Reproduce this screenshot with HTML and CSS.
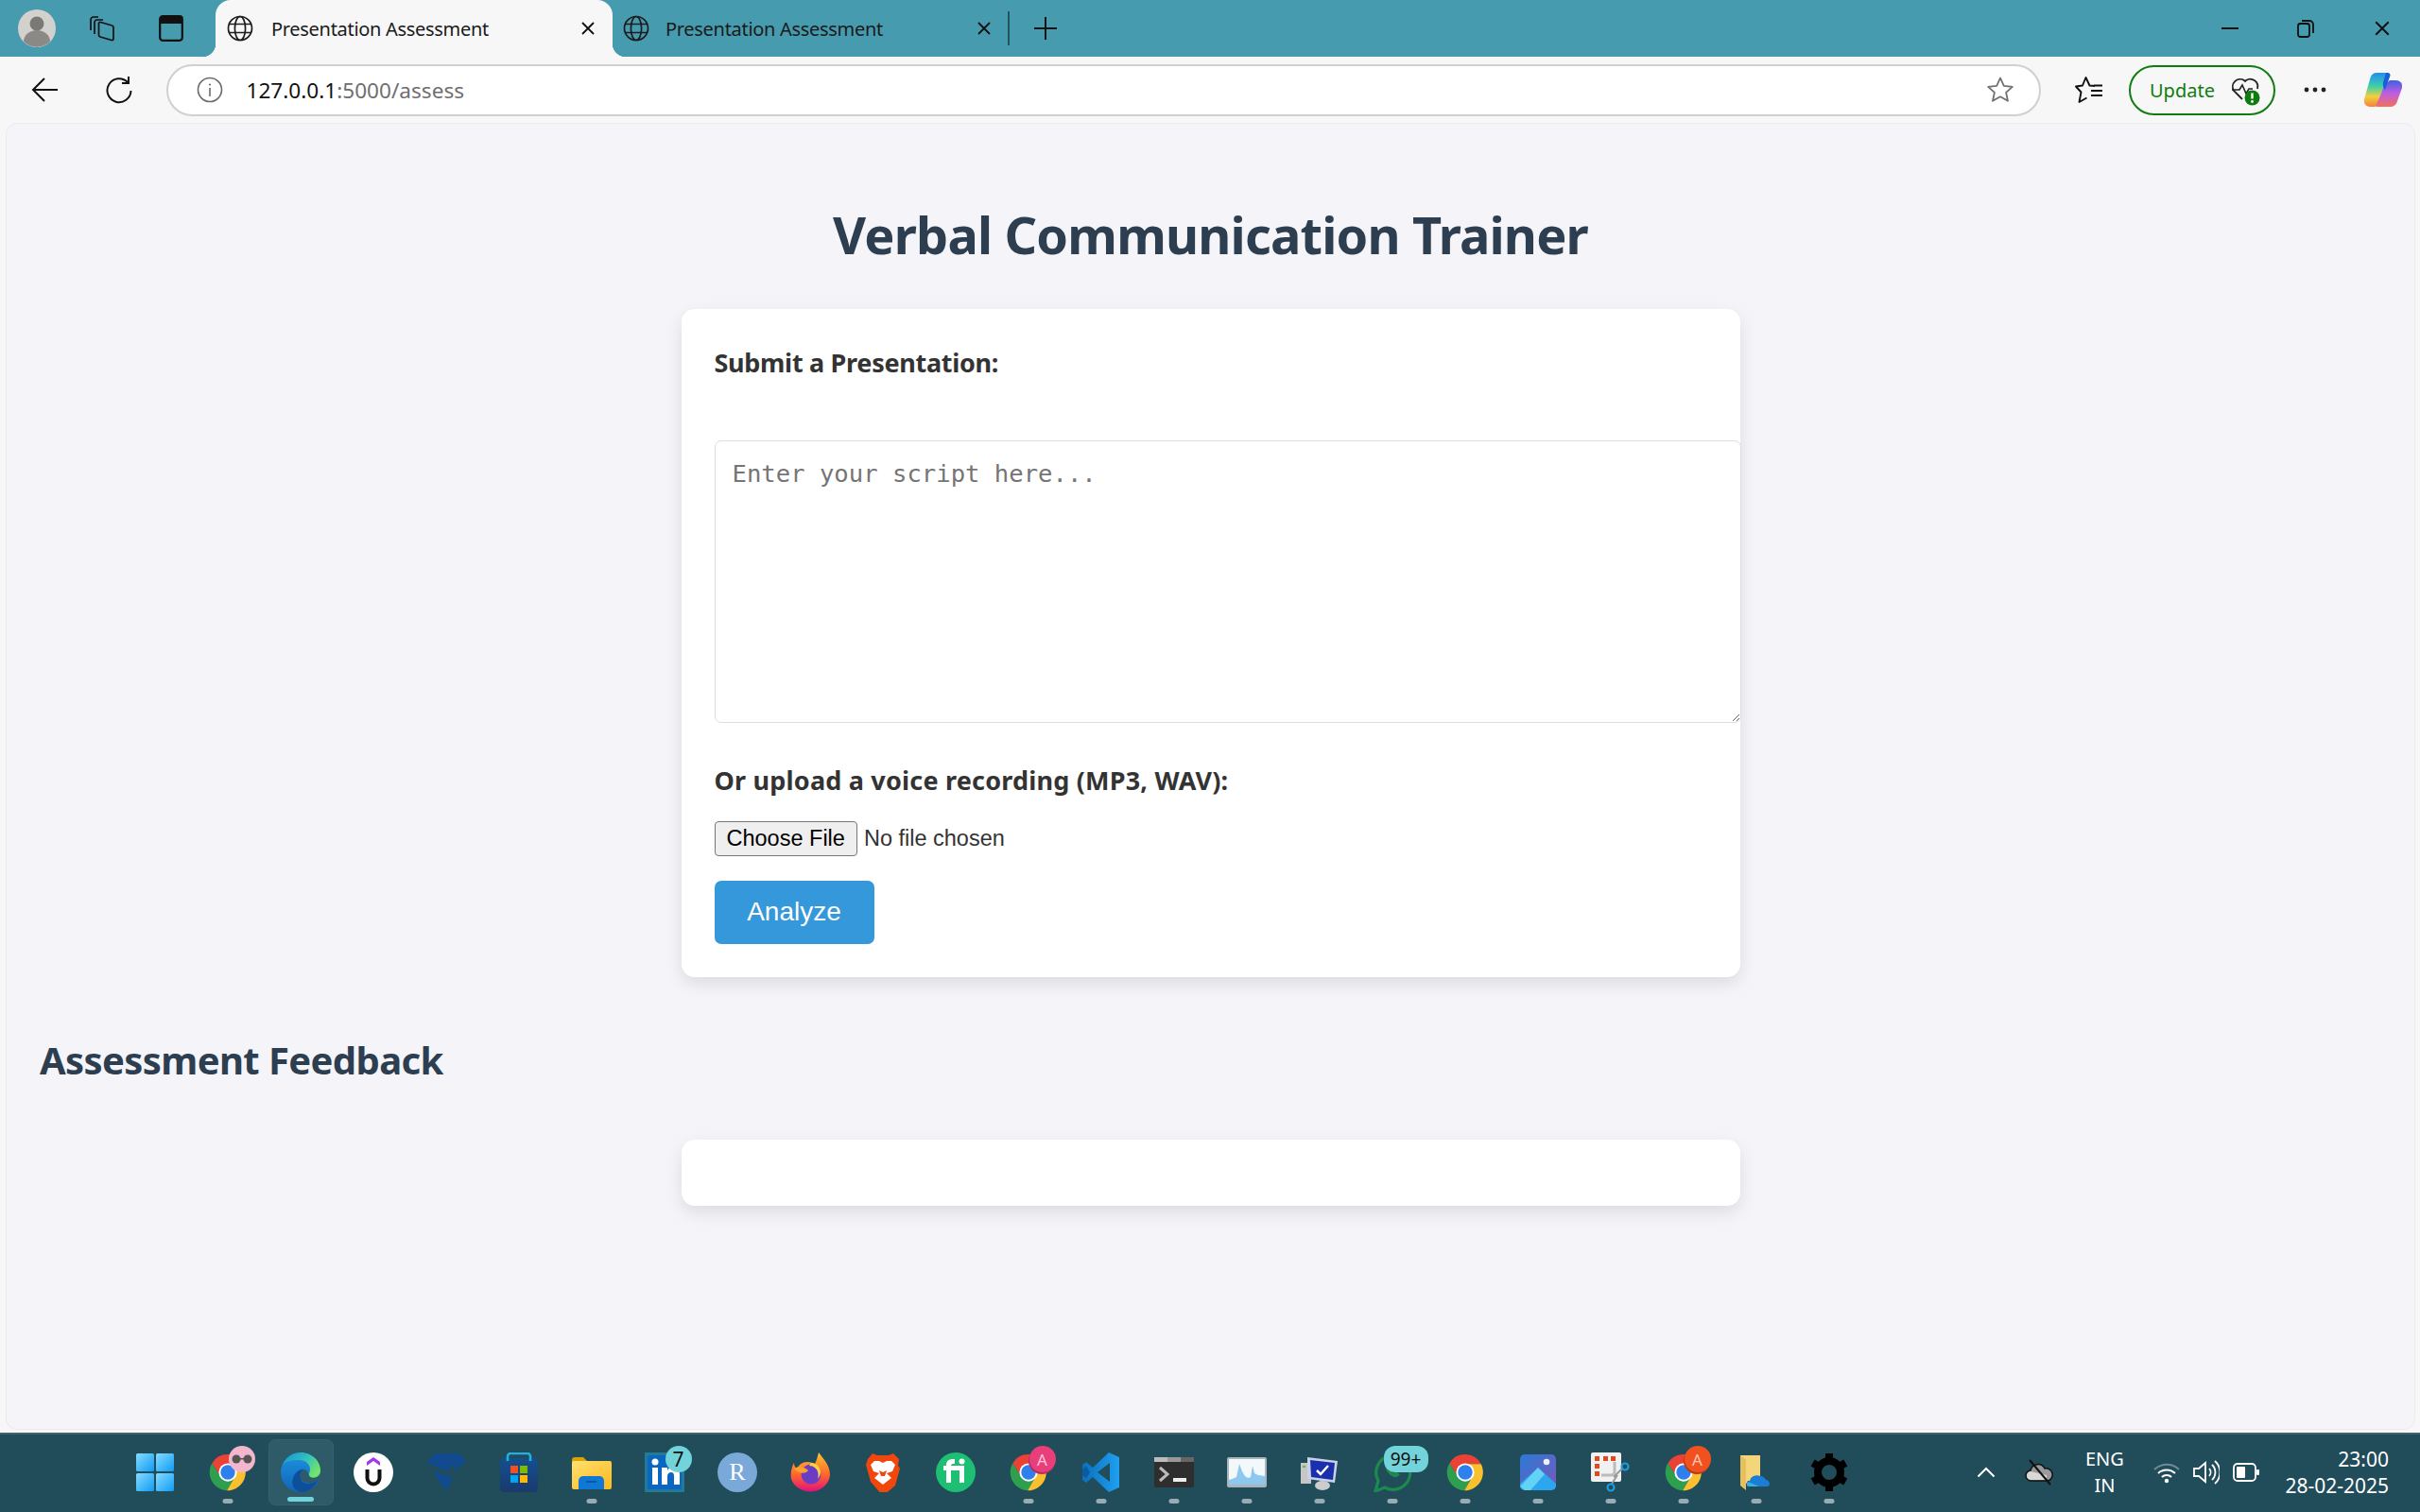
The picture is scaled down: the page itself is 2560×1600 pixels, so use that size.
FILE: index.html
```html
<!DOCTYPE html>
<html lang="en">
<head>
<meta charset="utf-8">
<title>Presentation Assessment</title>
<link rel="stylesheet" href="styles.css">
</head>
<body>
<svg class="defs" width="0" height="0" aria-hidden="true">
  <symbol id="globe" viewBox="0 0 28 28"><g fill="none" stroke="#1c1c1c" stroke-width="1.7"><circle cx="14" cy="14" r="12.5"/><ellipse cx="14" cy="14" rx="5.6" ry="12.5"/><path d="M2.5 9.5h23M2.5 18.5h23"/></g></symbol>
  <symbol id="x" viewBox="0 0 16 16"><path d="M2 2l12 12M14 2L2 14" fill="none" stroke="#111" stroke-width="1.8"/></symbol>
  <symbol id="chrome" viewBox="0 0 48 48">
    <path fill="#ea4335" d="M4.9 13L15.3 29A10 10 0 0 1 24 14H43.1A22 22 0 0 0 4.9 13Z"/>
    <path fill="#2e9e4f" d="M4.9 13A22 22 0 0 0 23 46L32.7 29A10 10 0 0 1 15.3 29Z"/>
    <path fill="#fbc02d" d="M43.1 14H24A10 10 0 0 1 32.7 29L23 46A22 22 0 0 0 43.1 14Z"/>
    <circle cx="24" cy="24" r="11" fill="#fff"/><circle cx="24" cy="24" r="8.8" fill="#2f80ed"/>
  </symbol>
  <linearGradient id="g-win" x1="0" y1="0" x2="1" y2="1"><stop offset="0" stop-color="#86dcff"/><stop offset="1" stop-color="#0f9cf5"/></linearGradient>
  <linearGradient id="g-edge" x1="0" y1="0" x2="1" y2="0.6"><stop offset="0" stop-color="#1590d0"/><stop offset=".55" stop-color="#2fc0c0"/><stop offset="1" stop-color="#72e468"/></linearGradient>
  <linearGradient id="g-edge2" x1="0" y1="0" x2="0" y2="1"><stop offset="0" stop-color="#1e93e0"/><stop offset="1" stop-color="#0f66b8"/></linearGradient>
  <linearGradient id="g-fold" x1="0" y1="0" x2="1" y2="1"><stop offset="0" stop-color="#ffe170"/><stop offset="1" stop-color="#fcb81e"/></linearGradient>
  <linearGradient id="g-fox" x1="0" y1="0" x2="0" y2="1"><stop offset="0" stop-color="#ffc52e"/><stop offset=".55" stop-color="#ff6a2a"/><stop offset="1" stop-color="#e3107a"/></linearGradient>
  <linearGradient id="g-code" x1="0" y1="0" x2="1" y2="0"><stop offset="0" stop-color="#0a6fbb"/><stop offset="1" stop-color="#1fa0ef"/></linearGradient>
  <linearGradient id="g-photo" x1="0" y1="0" x2="1" y2="1"><stop offset="0" stop-color="#2a7ad6"/><stop offset="1" stop-color="#7a58b8"/></linearGradient>
  <linearGradient id="g-store" x1="0" y1="0" x2="0" y2="1"><stop offset="0" stop-color="#154f8f"/><stop offset="1" stop-color="#1a3a6c"/></linearGradient>
  <linearGradient id="g-cop" x1="0" y1="0" x2="0" y2="1"><stop offset="0" stop-color="#1f8ef0"/><stop offset=".4" stop-color="#3fd0a8"/><stop offset=".7" stop-color="#f2d03c"/><stop offset="1" stop-color="#f5803a"/></linearGradient>
  <linearGradient id="g-cop2" x1="0" y1="0" x2="0" y2="1"><stop offset="0" stop-color="#3f5fe8"/><stop offset=".5" stop-color="#c05ee0"/><stop offset="1" stop-color="#f2705a"/></linearGradient>
</svg>

<header class="tabbar">
  <div class="profile"><svg width="40" height="40" viewBox="0 0 40 40"><circle cx="20" cy="20" r="20" fill="#d3d1cd"/><circle cx="20" cy="15" r="7.5" fill="#7b7976"/><path d="M6 34a14 12 0 0 1 28 0 20 20 0 0 1-28 0Z" fill="#8b8986"/></svg></div>
  <div class="bar-icon"><svg width="28" height="28" viewBox="0 0 28 28" fill="none" stroke="#111" stroke-width="1.7" stroke-linejoin="round"><path d="M12.500 7.500l12 3.500a2 2 0 0 1 1.500 2v12a1.500 1.500 0 0 1-2 1.500l-12-3.500a2 2 0 0 1-1.500-2v-12a1.500 1.500 0 0 1 2-1.500Z"/><path d="M6 20V7.500a2.500 2.500 0 0 1 2.500-2.500L15 5M2 16V5a3 3 0 0 1 3-3h5"/></svg></div>
  <div class="bar-icon"><svg width="26" height="28" viewBox="0 0 26 28"><rect x="1.2" y="1.2" width="23.6" height="25.6" rx="3" fill="none" stroke="#111" stroke-width="2.2"/><path d="M2 3a2 2 0 0 1 2-2h18a2 2 0 0 1 2 2v6H2Z" fill="#111"/></svg></div>
  <div class="tab tab-active">
    <svg class="tab-globe" width="28" height="28"><use href="#globe"/></svg>
    <span class="tab-title">Presentation Assessment</span>
    <svg class="tab-x" width="16" height="16"><use href="#x"/></svg>
  </div>
  <div class="tab tab-other">
    <svg class="tab-globe" width="28" height="28"><use href="#globe"/></svg>
    <span class="tab-title">Presentation Assessment</span>
    <svg class="tab-x" width="16" height="16"><use href="#x"/></svg>
  </div>
  <div class="tab-sep"></div>
  <svg class="plus" width="26" height="26" viewBox="0 0 26 26"><path d="M13 1v24M1 13h24" stroke="#111" stroke-width="2"/></svg>
  <div class="win-ctrl">
    <span class="win-btn"><svg width="18" height="4"><path d="M0 2h18" stroke="#111" stroke-width="2"/></svg></span>
    <span class="win-btn"><svg width="18" height="20" viewBox="0 0 18 20" fill="none" stroke="#111" stroke-width="1.8"><rect x="1" y="5" width="12" height="14" rx="2.5"/><path d="M5 2h8a4 4 0 0 1 4 4v9"/></svg></span>
    <span class="win-btn"><svg width="18" height="18"><use href="#x"/></svg></span>
  </div>
</header>

<nav class="toolbar">
  <svg class="tool-back" width="30" height="28" viewBox="0 0 30 28" fill="none" stroke="#111" stroke-width="2"><path d="M28 14H2M14 2L2 14l12 12"/></svg>
  <svg class="tool-reload" width="30" height="30" viewBox="0 0 30 30" fill="none" stroke="#111" stroke-width="2"><path d="M24 7A12.5 12.5 0 1 0 27.5 16"/><path d="M25 1v7h-7"/></svg>
  <div class="address">
    <svg class="info" width="28" height="28" viewBox="0 0 28 28"><circle cx="14" cy="14" r="12.5" fill="none" stroke="#6b6b6b" stroke-width="1.6"/><path d="M14 12v9" stroke="#6b6b6b" stroke-width="1.6"/><circle cx="14" cy="8.5" r="1.1" fill="#6b6b6b"/></svg>
    <span class="url"><span class="url-host">127.0.0.1</span>:5000/assess</span>
    <svg class="star" width="30" height="30" viewBox="0 0 30 30"><path d="M15 2.500l3.800 8.300 9 1-6.700 6.100 1.900 8.900L15 22.300l-8 4.500 1.900-8.900L2.200 11.800l9-1Z" fill="none" stroke="#707070" stroke-width="1.8" stroke-linejoin="round"/></svg>
  </div>
  <svg class="fav" width="30" height="28" viewBox="0 0 30 28" fill="none" stroke="#111" stroke-width="1.9" stroke-linejoin="round"><path d="M21 10l-5.500-.5L11.500 1 8 9.500 1 10.500l5.500 6L4.500 27l8-4.500"/><path d="M20 9.500h9M17 15h12M17 20h12"/></svg>
  <div class="update">
    <span class="update-label">Update</span>
    <svg class="update-icon" width="34" height="34" viewBox="0 0 34 34"><path d="M14 27L5 18a8 8 0 0 1 11-11l1 1 1-1a8 8 0 0 1 12 9" fill="none" stroke="#222" stroke-width="1.8"/><path d="M3 17h8l3-5 4 9 3-5h4" fill="none" stroke="#222" stroke-width="1.6"/><circle cx="24.500" cy="25.500" r="8" fill="#107c10"/><path d="M24.500 20.500v6" stroke="#fff" stroke-width="2.400"/><circle cx="24.500" cy="29.500" r="1.400" fill="#fff"/></svg>
  </div>
  <svg class="more" width="24" height="6" viewBox="0 0 24 6" fill="#222"><circle cx="3" cy="3" r="2.400"/><circle cx="12" cy="3" r="2.400"/><circle cx="21" cy="3" r="2.400"/></svg>
  <svg class="copilot" width="40" height="36" viewBox="0 0 40 36"><path d="M13 0h11c3 0 4 2 3 4L16 32c-1 3-3 4-6 4H7c-5 0-8-3-7-8L6 7c1-4 3-7 7-7Z" fill="url(#g-cop)"/><path d="M27 8h6c5 0 8 3 7 8l-5 14c-1 4-4 6-8 6H15c-2 0-3-1-2-3l5-11c2-7 5-11 9-14Z" fill="url(#g-cop2)"/><path d="M24 0c3 0 4 2 3 4l-5 14c-2-2-3-6-1-11l2-7Z" fill="#1b5fd8"/></svg>
</nav>

<main class="page">
  <h1 class="title">Verbal Communication Trainer</h1>
  <section class="card card-form">
    <label class="label label-top" for="script">Submit a Presentation:</label>
    <textarea class="script" id="script" placeholder="Enter your script here..."></textarea>
    <label class="label label-file" for="voice">Or upload a voice recording (MP3, WAV):</label>
    <input class="file" id="voice" type="file">
    <button class="analyze" type="button">Analyze</button>
  </section>
  <h2 class="subtitle">Assessment Feedback</h2>
  <section class="card card-empty"></section>
</main>

<footer class="taskbar">
  <div class="apps">
    <div class="slot"><svg width="42" height="42" viewBox="0 0 42 42" fill="url(#g-win)"><rect x="1" y="1" width="19" height="19" rx="1.500"/><rect x="22" y="1" width="19" height="19" rx="1.500"/><rect x="1" y="22" width="19" height="19" rx="1.500"/><rect x="22" y="22" width="19" height="19" rx="1.500"/></svg></div>
    <div class="slot slot-run"><svg width="42" height="42"><use href="#chrome"/></svg>
      <span class="badge badge-glasses"><svg width="22" height="10" viewBox="0 0 22 10" fill="#555"><circle cx="5" cy="5" r="4.500"/><circle cx="17" cy="5" r="4.500"/><path d="M9 4h4v1.500H9z"/></svg></span></div>
    <div class="slot slot-active"><svg width="42" height="42" viewBox="0 0 42 42"><circle cx="21" cy="21" r="21" fill="url(#g-edge2)"/><path d="M1.500 13C6 5 13 0 21 0c12 0 21 9 21 19 0 7-7 9-11 7-3-2 0-4 0-8 0-6-5-10-12-10C11 8 5 10 1.500 13Z" fill="url(#g-edge)"/><path d="M21 42c-8-2-10-9-8-15 2-6 7-10 12-9-4 2-5 6-4 10 2 6 12 7 19 0-3 8-10 14-19 14Z" fill="#0e4f9c"/><path d="M25 18c4 1 4 5 6 8 4 2 9 1 11-4l-1 6c-7 6-17 5-20 0-1-4 0-8 4-10Z" fill="#2f5a68"/></svg></div>
    <div class="slot"><svg width="42" height="42" viewBox="0 0 42 42"><circle cx="21" cy="21" r="21" fill="#fff"/><path d="M21 5l7 5v4l-7-5-7 5v-4Z" fill="#a435f0"/><path d="M14.500 18v9a6.500 6.500 0 0 0 13 0v-9" fill="none" stroke="#111" stroke-width="4"/></svg></div>
    <div class="slot"><svg width="42" height="42" viewBox="0 0 42 42" fill="#114a8f"><path d="M9 1h26l7 9-13 10 1-9-8 9-7-3c-6-3-12-5-15-6Z"/><path d="M7 19l12 5 9 2-7 15-10-14Z"/></svg></div>
    <div class="slot"><svg width="42" height="42" viewBox="0 0 42 42"><rect x="1" y="6" width="40" height="36" rx="4" fill="url(#g-store)"/><path d="M9 9V4a3 3 0 0 1 3-3h18a3 3 0 0 1 3 3v5" fill="none" stroke="#21b0e6" stroke-width="2.600"/><rect x="12" y="14" width="8" height="8" fill="#f25022"/><rect x="22" y="14" width="8" height="8" fill="#7fba00"/><rect x="12" y="24" width="8" height="8" fill="#00a4ef"/><rect x="22" y="24" width="8" height="8" fill="#ffb900"/></svg></div>
    <div class="slot slot-run"><svg width="42" height="42" viewBox="0 0 42 42"><path d="M0 8a3 3 0 0 1 3-3h9l4 4v4H0Z" fill="#d9a106"/><rect y="9" width="42" height="30" rx="2" fill="url(#g-fold)"/><path d="M7 39V30a5 5 0 0 1 5-5h17a5 5 0 0 1 5 5v9Z" fill="#0f78d4"/><path d="M15 31h11" stroke="#0b4f8e" stroke-width="1.500"/></svg></div>
    <div class="slot"><svg width="42" height="42" viewBox="0 0 42 42"><rect width="42" height="42" fill="#227b96"/><rect x="3" y="3" width="36" height="36" rx="2" fill="#0b66c2"/><rect x="8" y="16" width="6" height="18" fill="#fff"/><circle cx="11" cy="10" r="3.500" fill="#fff"/><path d="M18 16h6v3c1-2 3-3.500 6-3.500 5 0 7 3 7 8V34h-6v-9c0-2.500-1-4-3-4s-4 1.500-4 4v9h-6Z" fill="#fff"/></svg>
      <span class="badge badge-count">7</span></div>
    <div class="slot"><div class="rstudio">R</div></div>
    <div class="slot"><svg width="42" height="42" viewBox="0 0 42 42"><path d="M30 0c5 7 12 13 12 24a21 19 0 0 1-41 4C0 24 1 16 4 11c0 3 1 5 3 6 2-4 6-7 11-7 3 0 6 1 8 2 2-4 3-8 4-12Z" fill="url(#g-fox)"/><circle cx="22" cy="23" r="10.500" fill="#6b3cc4"/><path d="M4 17c5-3 11-2 15 2-3 4-9 4-15-2Z" fill="#ffa02c"/><path d="M22 11c5 0 10 4 10 10 0 2-1 5-3 7 1-3 1-8-2-11-2-2-4-3-7-3 1-1 1-2 2-3Z" fill="#ffd044"/></svg></div>
    <div class="slot"><svg width="36" height="42" viewBox="0 0 36 42"><path d="M7 1l5 2h12l5-2 6 6-1 7 2 3-5 18-13 11L5 31 0 13l2-6Z" fill="#f1460c"/><path d="M9 9h5l4 2 4-2h5l4 4-3 7-6 2 5 5-9 7-9-7 5-5-6-2-3-7Z" fill="#fff"/><path d="M14 19l4 2 4-2-2 6h-4Z" fill="#f1460c"/></svg></div>
    <div class="slot"><svg width="42" height="42" viewBox="0 0 42 42"><circle cx="21" cy="21" r="21" fill="#1dbf73"/><path d="M11 32V19H8v-5h3v-1c0-4 3-6 7-6h2v5h-1c-2 0-3 .5-3 2h14v18h-5V19h-9v13Z" fill="#fff"/><circle cx="27.500" cy="9.500" r="3" fill="#fff"/></svg></div>
    <div class="slot slot-run"><svg width="42" height="42"><use href="#chrome"/></svg>
      <span class="badge badge-pink">A</span></div>
    <div class="slot slot-run"><svg width="42" height="42" viewBox="0 0 42 42"><path d="M29 0l11 5v32l-11 5-17-16-7 6-4-3v-16l4-3 7 6Z" fill="url(#g-code)"/><path d="M30 11L17 21l13 10Z" fill="#214c5a"/><path d="M5 15l4 6-4 6-4-3v-6Z" fill="#0a5c9e"/></svg></div>
    <div class="slot slot-run"><svg width="42" height="32" viewBox="0 0 42 32"><rect width="42" height="32" rx="2" fill="#2e2e2e"/><rect width="14" height="5" fill="#bbb"/><rect x="14" width="14" height="5" fill="#999"/><rect x="28" width="14" height="5" fill="#666"/><path d="M6 11l8 7-8 7" fill="none" stroke="#bbb" stroke-width="3"/><rect x="20" y="22" width="14" height="4" fill="#eee"/></svg></div>
    <div class="slot slot-run"><svg width="42" height="32" viewBox="0 0 42 32"><rect width="42" height="32" rx="2" fill="#a9b4bc"/><rect x="2" y="2" width="38" height="27" fill="#f3f8fb"/><path d="M2 24c4-1 6-2 8-3l3-14 3 8 3 5 3 2 3-1 2-12 2 8 4 2 7 1v9H2Z" fill="#8ec8ee"/></svg></div>
    <div class="slot slot-run"><svg width="42" height="38" viewBox="0 0 42 38"><rect x="1" y="9" width="11" height="22" fill="#c6c6c6"/><rect x="3" y="12" width="3" height="2" fill="#5dbb46"/><path d="M8 3l32 4-3 23-29-4Z" fill="#c9d2e6"/><path d="M11 6l26 3-2 18-23-3Z" fill="#1a2fae"/><path d="M18 17l4 4 8-9" fill="none" stroke="#fff" stroke-width="2.500"/><ellipse cx="24" cy="33" rx="8" ry="5" fill="#ccc"/></svg></div>
    <div class="slot slot-run"><svg width="42" height="42" viewBox="0 0 42 42"><path d="M3 41l3-11a18 18 0 1 1 7 7Z" fill="none" stroke="#1c8a4f" stroke-width="3.200"/><path d="M15 12c-2 2-2 5 1 9s7 6 10 5l3-3-5-3-2 2c-2-1-3-3-4-5l2-2-2-4Z" fill="#1c8a4f"/></svg>
      <span class="badge badge-wide">99+</span></div>
    <div class="slot slot-run"><svg width="42" height="42"><use href="#chrome"/></svg></div>
    <div class="slot slot-run"><svg width="38" height="38" viewBox="0 0 38 38"><rect width="38" height="38" rx="5" fill="url(#g-photo)"/><circle cx="28" cy="8" r="3.300" fill="#eef"/><path d="M0 31L19 14l19 17v2a5 5 0 0 1-5 5H5a5 5 0 0 1-5-5Z" fill="#2da6f0"/><path d="M0 34L19 14l7 7-15 17H5Z" fill="#62d2f5"/></svg></div>
    <div class="slot slot-run"><svg width="42" height="42" viewBox="0 0 42 42"><rect width="32" height="31" rx="2" fill="#f1f1f1"/><g fill="#e04a1f"><rect x="4" y="4" width="5" height="5"/><rect x="13" y="4" width="5" height="5"/><rect x="21" y="4" width="5" height="5"/><rect x="4" y="12" width="5" height="5"/><rect x="4" y="20" width="5" height="5"/></g><path d="M11 24h10a4 4 0 0 0 4-4V10" fill="none" stroke="#bbb" stroke-width="3"/><path d="M24 26l9-9M28 24l-6 9" stroke="#999" stroke-width="2"/><circle cx="36" cy="15" r="3.500" fill="none" stroke="#1d9be0" stroke-width="2.200"/><circle cx="21" cy="37" r="3.500" fill="none" stroke="#1d9be0" stroke-width="2.200"/></svg></div>
    <div class="slot slot-run"><svg width="42" height="42"><use href="#chrome"/></svg>
      <span class="badge badge-orange">A</span></div>
    <div class="slot slot-run"><svg width="34" height="38" viewBox="0 0 34 38"><path d="M0 1h21v27H8l-4 7-4-3Z" fill="#f4d67a"/><path d="M0 1l6 5v32l-6-5Z" fill="#e7bf5d"/><path d="M9 34c-3 0-3-6 1-6 1-5 7-7 11-5 3 0 5 2 6 4 4 0 6 7 1 7Z" fill="#1a7fd4"/><path d="M9 34c-2 0-3-3-1-5l12 5Z" fill="#38b0f0"/></svg></div>
    <div class="slot slot-run"><svg width="42" height="42" viewBox="0 0 42 42"><circle cx="21" cy="21" r="12" fill="none" stroke="#000" stroke-width="8"/><g stroke="#000" stroke-width="8"><path d="M21 1v7M21 34v7M3.700 11l6 3.500M32.300 27.500l6 3.500M3.700 31l6-3.500M32.300 14.500l6-3.500"/></g></svg></div>
  </div>
  <div class="tray">
    <svg class="tray-chev" width="20" height="12" viewBox="0 0 20 12"><path d="M1.500 10.500L10 2l8.500 8.500" fill="none" stroke="#fff" stroke-width="2"/></svg>
    <svg class="tray-cloud" width="30" height="28" viewBox="0 0 30 28"><path d="M7 23a5.500 5.500 0 0 1-1-11 8 8 0 0 1 15-2 6.500 6.500 0 0 1 3 13Z" fill="#9a9a9a" stroke="#111" stroke-width="1.500"/><path d="M7 22a4.500 4.500 0 0 1-1-9l17 4v5Z" fill="#d8d8d8"/><path d="M5 1l22 26" stroke="#111" stroke-width="2"/></svg>
    <div class="lang"><span>ENG</span><span>IN</span></div>
    <svg class="tray-wifi" width="28" height="24" viewBox="0 0 28 24" fill="none" stroke-width="2"><path d="M1 9a19 19 0 0 1 26 0" stroke="#6d8c97"/><path d="M5 13a13 13 0 0 1 18 0M9 17a7 7 0 0 1 10 0" stroke="#fff"/><circle cx="14" cy="21" r="2.200" fill="#fff"/></svg>
    <svg class="tray-vol" width="28" height="26" viewBox="0 0 28 26" fill="none" stroke="#fff" stroke-width="1.800"><path d="M1 9v8h5l7 6V3L6 9Z"/><path d="M17 9a6 6 0 0 1 0 8M20 5a11 11 0 0 1 0 16M23 1a16 16 0 0 1 0 24"/></svg>
    <svg class="tray-bat" width="28" height="20" viewBox="0 0 28 20"><rect x="1" y="1" width="23" height="18" rx="4" fill="none" stroke="#fff" stroke-width="1.800"/><rect x="4" y="4" width="9" height="12" rx="1" fill="#fff"/><rect x="25" y="7" width="3" height="6" rx="1" fill="#fff"/></svg>
    <div class="clock"><span>23:00</span><span>28-02-2025</span></div>
  </div>
</footer>
</body>
</html>
```

FILE: styles.css
```css
* { box-sizing: border-box; }
html, body { height: 100%; }
body {
  margin: 0;
  height: 1600px;
  display: flex;
  flex-direction: column;
  background: #f7f7f7;
  font-family: "Noto Sans", "Open Sans", sans-serif;
  overflow: hidden;
}
.defs { position: absolute; }
svg { display: block; flex: none; }

/* tab strip */
.tabbar {
  height: 60px;
  flex: none;
  display: flex;
  align-items: center;
  background: #479bae;
  padding-left: 19px;
}
.profile { width: 40px; margin-right: 35px; }
.bar-icon { width: 28px; display: flex; justify-content: center; }
.bar-icon + .bar-icon { margin-left: 45px; margin-right: 33px; }
.tab {
  width: 420px;
  height: 60px;
  display: flex;
  align-items: center;
  flex: none;
}
.tab-active {
  background: #f7f7f7;
  border-radius: 16px 16px 0 0;
  padding-left: 12px;
  position: relative;
}
.tab-active::before,
.tab-active::after {
  content: "";
  position: absolute;
  bottom: 0;
  width: 14px;
  height: 14px;
}
.tab-active::before { left: -14px; background: radial-gradient(circle at 0 0, transparent 14px, #f7f7f7 14.5px); }
.tab-active::after { right: -14px; background: radial-gradient(circle at 100% 0, transparent 14px, #f7f7f7 14.5px); }
.tab-other { width: 418px; padding-left: 11px; }
.tab-globe { margin-right: 19px; }
.tab-other .tab-globe { margin-right: 17px; }
.tab-title {
  font-size: 20px;
  letter-spacing: -.3px;
  color: #1a1a1a;
  width: 304px;
  white-space: nowrap;
}
.tab-other .tab-title { width: 325px; }
.tab-x { margin-left: 23px; }
.tab-other .tab-x { margin-left: 4px; }
.tab-sep { width: 1.500px; height: 36px; background: #24525e; }
.plus { margin-left: 25px; }
.win-ctrl { margin-left: auto; display: flex; padding-right: 0; }
.win-btn { width: 80.500px; height: 60px; display: flex; align-items: center; justify-content: center; }

/* toolbar */
.toolbar {
  height: 70px;
  flex: none;
  display: flex;
  align-items: center;
  padding-left: 33px;
}
.tool-back { margin-right: 48px; }
.tool-reload { margin-right: 34.500px; }
.address {
  width: 1983.500px;
  height: 55px;
  background: #fff;
  border: 2px solid #d0d0d0;
  border-radius: 28px;
  display: flex;
  align-items: center;
  padding: 0 26px 0 30px;
}
.info { margin-right: 25px; }
.url { font-size: 22.600px; color: #6f6f6f; flex: 1; white-space: nowrap; }
.url-host { color: #111; }
.fav { margin-left: 36px; }
.update {
  margin-left: 27px;
  width: 155px;
  height: 53px;
  border: 2px solid #107c10;
  border-radius: 27px;
  display: flex;
  align-items: center;
  padding-left: 20px;
}
.update-label { font-size: 20px; color: #107c10; width: 84px; }
.more { margin-left: 30px; }
.copilot { margin-left: 40px; }

/* page */
.page {
  flex: none;
  height: 1383px;
  margin: 0 5px 0 6px;
  background: #f4f4f9;
  border: 1px solid #ebebeb;
  border-radius: 12px;
  color: #333;
  overflow: hidden;
}
.title {
  margin: 0;
  padding-top: 79px;
  height: 196px;
  text-align: center;
  font-size: 54px;
  letter-spacing: -.8px;
  line-height: 76px;
  font-weight: 700;
  color: #2c3e50;
}
.card {
  width: 1120px;
  margin: 0 auto;
  background: #fff;
  border-radius: 14px;
  box-shadow: 0 7px 18px rgba(0, 0, 0, .1);
  padding: 35px;
}
.card-form { height: 707px; }
.label {
  display: block;
  font-size: 27px;
  line-height: 38px;
  font-weight: 700;
  color: #333;
}
.label-top { margin: 3px 0 63px; letter-spacing: -.3px; }
.label-file { margin: 42px 0 23.500px; letter-spacing: .2px; }
.script {
  display: block;
  width: 1086px;
  height: 299px;
  padding: 19px 18px 16px;
  border: 1.750px solid #ddd;
  border-radius: 7px;
  font-family: "DejaVu Sans Mono", monospace;
  font-size: 25.600px;
  color: #333;
  background: #fff;
  outline: none;
}
.script::placeholder { color: #757575; }
.file {
  display: block;
  font-family: "Liberation Sans", Arial, sans-serif;
  font-size: 23.500px;
  color: #333;
  height: 37px;
}
.file::file-selector-button {
  font: inherit;
  height: 37px;
  padding: 0 12px;
  margin-right: 7px;
  background: #efefef;
  color: #000;
  border: 1.750px solid #767676;
  border-radius: 4px;
}
.analyze {
  display: block;
  margin-top: 26px;
  width: 169px;
  height: 67px;
  border: 0;
  border-radius: 7px;
  background: #3498db;
  color: #fff;
  font-family: "Liberation Sans", Arial, sans-serif;
  font-size: 28px;
}
.subtitle {
  margin: 59px 0 0;
  padding-left: 35px;
  height: 113px;
  font-size: 40px;
  letter-spacing: -.6px;
  line-height: 58px;
  font-weight: 700;
  color: #2c3e50;
}
.card-empty { height: 69px; }

/* taskbar */
.taskbar {
  margin-top: 3px;
  height: 84px;
  flex: none;
  display: flex;
  align-items: center;
  background: #214c5a;
  border-top: 2px solid #3f6470;
  padding-bottom: 2px;
}
.apps { display: flex; padding-left: 125.500px; }
.slot {
  width: 77px;
  height: 70px;
  flex: none;
  display: flex;
  align-items: center;
  justify-content: center;
  position: relative;
}
.slot-run::after,
.slot-active::after {
  content: "";
  position: absolute;
  left: 50%;
  bottom: 2px;
  transform: translateX(-50%);
  width: 11px;
  height: 5px;
  border-radius: 3px;
  background: #9aacb3;
}
.slot-active {
  width: 69px;
  margin: 0 4px;
  background: #2f5a68;
  border: 1px solid #375f6c;
  border-radius: 7px;
}
.slot-active::after { width: 28px; background: #6fd5db; bottom: 3px; }
.badge {
  position: absolute;
  left: 39px;
  top: 7px;
  width: 28px;
  height: 28px;
  border-radius: 50%;
  display: flex;
  align-items: center;
  justify-content: center;
  font-size: 16px;
  color: #111;
}
.badge-glasses { background: #f2b6cd; }
.badge-count { background: #73d3da; font-size: 21px; }
.badge-pink { background: #e83e79; color: #ffc6da; box-shadow: -1px 2px 0 #b42d62; font-size: 17px; }
.badge-orange { background: #f1501f; color: #ffc7ae; box-shadow: -1px 2px 0 #b83a17; font-size: 17px; }
.badge-wide {
  left: 29px;
  width: 47px;
  border-radius: 12px;
  background: #73d3da;
  font-size: 19px;
}
.rstudio {
  width: 42px;
  height: 42px;
  border-radius: 50%;
  background: #79a8d9;
  color: #fff;
  font-family: "Liberation Serif", serif;
  font-size: 26px;
  display: flex;
  align-items: center;
  justify-content: center;
}
.tray {
  margin-left: auto;
  padding-right: 33px;
  display: flex;
  align-items: center;
  color: #fff;
}
.tray-cloud { margin-left: 31px; }
.lang {
  margin-left: 30px;
  width: 48px;
  display: flex;
  flex-direction: column;
  align-items: center;
  font-size: 20px;
  line-height: 28px;
}
.tray-wifi { margin-left: 28px; }
.tray-vol { margin-left: 14px; }
.tray-bat { margin-left: 14px; }
.clock {
  margin-left: 27px;
  display: flex;
  flex-direction: column;
  align-items: flex-end;
  font-size: 21px;
  line-height: 28px;
}
```
